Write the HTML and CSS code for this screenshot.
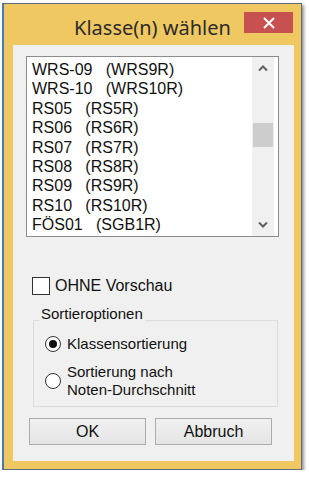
FILE: index.html
```html
<!DOCTYPE html>
<html lang="de">
<head>
<meta charset="utf-8">
<title>Klasse(n) wählen</title>
<link rel="stylesheet" href="styles.css">
</head>
<body>
<div class="window">
  <div class="titlebar">
    <div class="title">Klasse(n) wählen</div>
    <div class="close">
      <svg width="12" height="12" viewBox="0 0 12 12"><path d="M1 1 L11 11 M11 1 L1 11" stroke="#fff" stroke-width="2" fill="none"/></svg>
    </div>
  </div>
  <div class="content">
    <div class="listbox">
      <ul class="items">
        <li>WRS-09   (WRS9R)</li>
        <li>WRS-10   (WRS10R)</li>
        <li>RS05   (RS5R)</li>
        <li>RS06   (RS6R)</li>
        <li>RS07   (RS7R)</li>
        <li>RS08   (RS8R)</li>
        <li>RS09   (RS9R)</li>
        <li>RS10   (RS10R)</li>
        <li>FÖS01   (SGB1R)</li>
      </ul>
      <div class="scrollbar">
        <div class="arrow">
          <svg width="10" height="6" viewBox="0 0 10 6"><path d="M1 5.5 L5 1.5 L9 5.5" stroke="#606060" stroke-width="2" fill="none"/></svg>
        </div>
        <div class="track">
          <div class="thumb"></div>
        </div>
        <div class="arrow">
          <svg width="10" height="6" viewBox="0 0 10 6"><path d="M1 0.5 L5 4.5 L9 0.5" stroke="#606060" stroke-width="2" fill="none"/></svg>
        </div>
      </div>
    </div>
    <label class="check">
      <span class="box"></span>
      <span>OHNE Vorschau</span>
    </label>
    <div class="group">
      <span class="group-label">Sortieroptionen</span>
      <div class="radio">
        <span class="circle checked"></span>
        <span>Klassensortierung</span>
      </div>
      <div class="radio">
        <span class="circle"></span>
        <span>Sortierung nach<br>Noten-Durchschnitt</span>
      </div>
    </div>
    <div class="buttons">
      <div class="btn">OK</div>
      <div class="btn">Abbruch</div>
    </div>
  </div>
</div>
</body>
</html>
```

FILE: styles.css
```css
*, *::before, *::after {
  box-sizing: border-box;
}
html, body {
  margin: 0;
  padding: 0;
  background: #ffffff;
}
body {
  font-family: "Liberation Sans", Arial, sans-serif;
}
.window {
  margin: 3px 0 0 2px;
  width: 300px;
  height: 467px;
  background: #f0c862;
  border: 1px solid #5c6c80;
  border-left: 2px solid #4a78b0;
  box-shadow: 2px 2px 3px rgba(60, 60, 60, 0.55);
  display: flex;
  flex-direction: column;
}
.titlebar {
  height: 41px;
  flex: none;
  position: relative;
  display: flex;
  align-items: center;
  justify-content: center;
}
.title {
  font-family: "Noto Sans", "Open Sans", sans-serif;
  font-size: 20px;
  color: #2b2b2b;
  margin-top: 5px;
}
.close {
  position: absolute;
  left: 240px;
  top: 8px;
  width: 49px;
  height: 21px;
  background: #c75050;
  display: flex;
  align-items: center;
  justify-content: center;
}
.content {
  margin: 0 7px 8px 9px;
  flex: 1;
  background: #f0f0f0;
  display: flex;
  flex-direction: column;
}
.listbox {
  margin: 11px 15px 0 13px;
  height: 181px;
  flex: none;
  border: 1px solid #8c8c8c;
  background: #fff;
  display: flex;
}
.items {
  list-style: none;
  margin: 0;
  padding: 3px 0 0 5px;
  flex: 1;
  font-size: 16px;
  line-height: 19.4px;
  color: #111;
  overflow: hidden;
}
.items li {
  white-space: pre;
  height: 19.4px;
}
.scrollbar {
  width: 22px;
  margin-right: 4px;
  background: #f0f0f0;
  display: flex;
  flex-direction: column;
}
.arrow {
  height: 22px;
  display: flex;
  align-items: center;
  justify-content: center;
}
.track {
  flex: 1;
  padding-top: 44px;
}
.thumb {
  height: 24px;
  margin: 0 1px;
  background: #cdcdcd;
}
.check {
  margin: 40px 0 0 19px;
  display: flex;
  align-items: center;
  gap: 5px;
  font-size: 16px;
  color: #111;
  height: 18px;
}
.box {
  width: 18px;
  height: 18px;
  border: 1px solid #333;
  background: #fff;
}
.group {
  position: relative;
  margin: 25px 16px 0 20px;
  height: 87px;
  flex: none;
  border: 1px solid #dcdcdc;
  font-size: 15px;
  color: #111;
  padding: 14px 0 0 11px;
  display: flex;
  flex-direction: column;
  gap: 10px;
}
.group-label {
  position: absolute;
  left: 5px;
  top: -16px;
  padding: 0 2px;
  background: #f0f0f0;
  line-height: 17px;
}
.radio {
  display: flex;
  align-items: center;
  gap: 6px;
  line-height: 18px;
}
.circle {
  width: 16px;
  height: 16px;
  border: 1px solid #333;
  border-radius: 50%;
  background: #fff;
  position: relative;
  flex: none;
}
.circle.checked::after {
  content: "";
  position: absolute;
  left: 3px;
  top: 3px;
  width: 8px;
  height: 8px;
  border-radius: 50%;
  background: #111;
}
.buttons {
  margin: 11px 0 0 16px;
  display: flex;
  gap: 9px;
}
.btn {
  width: 117px;
  height: 27px;
  border: 1px solid #acacac;
  background: linear-gradient(#f0f0f0, #e5e5e5);
  font-size: 16px;
  color: #111;
  display: flex;
  align-items: center;
  justify-content: center;
  padding-top: 1px;
}
```
